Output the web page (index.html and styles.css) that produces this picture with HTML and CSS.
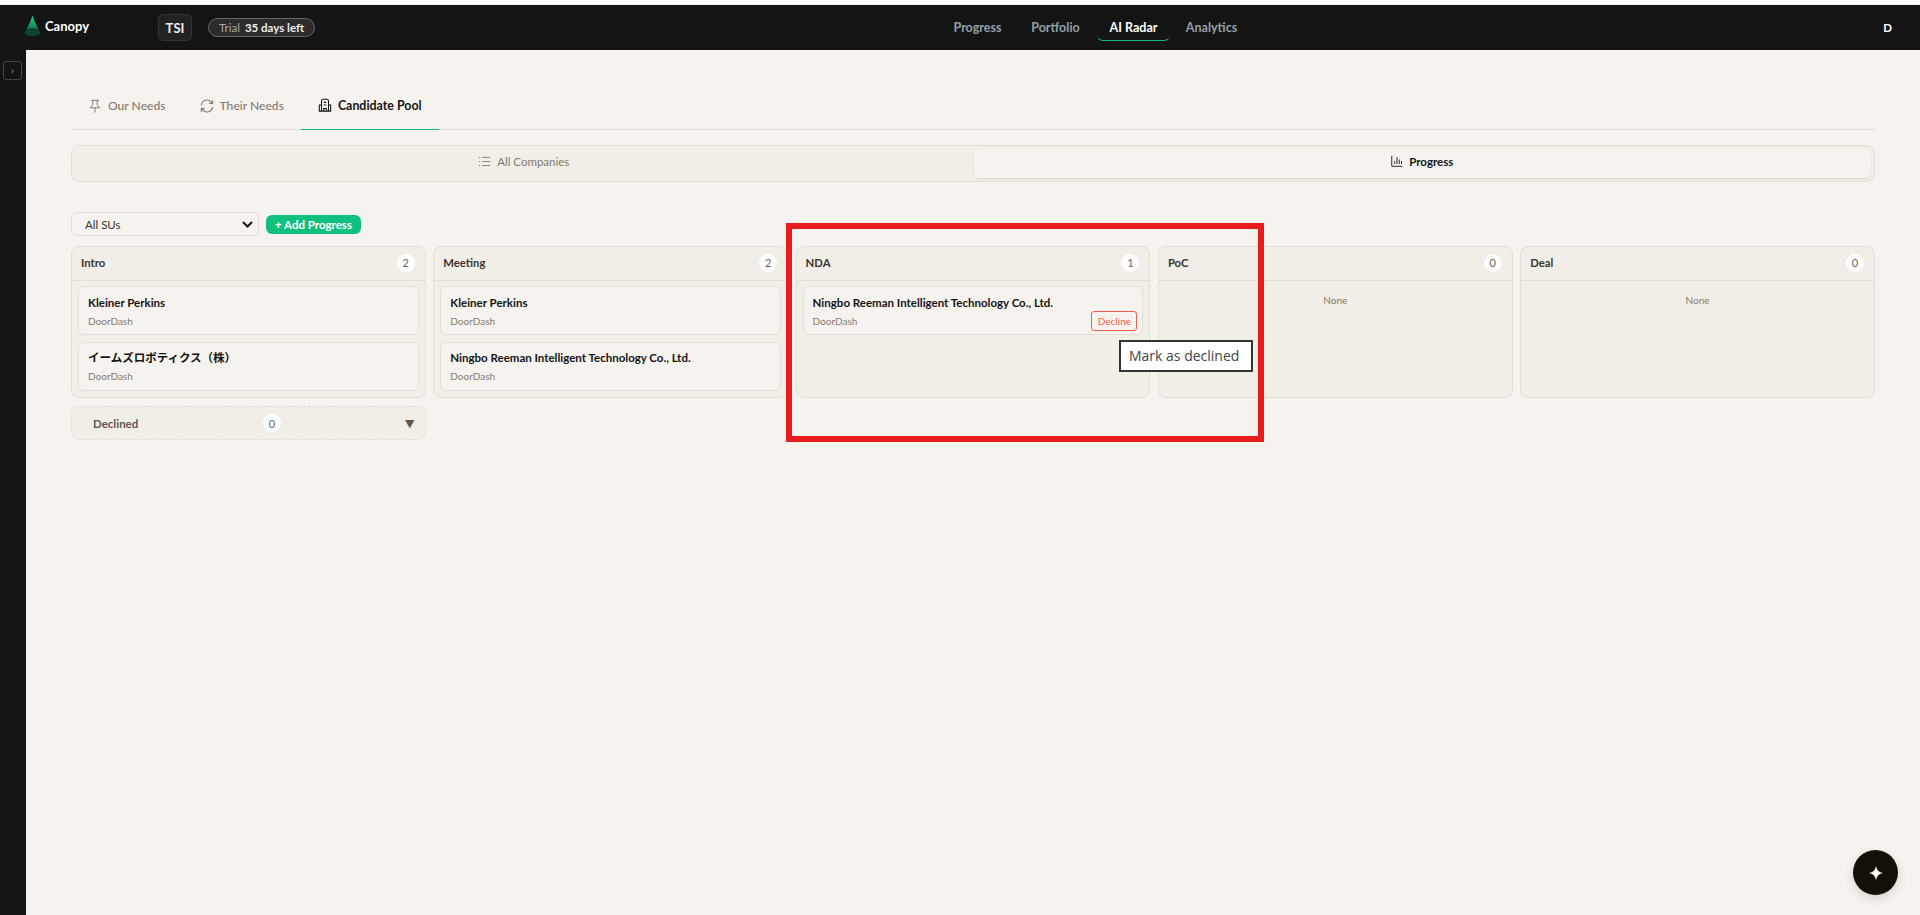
FILE: index.html
```html
<!DOCTYPE html>
<html lang="en">
<head>
<meta charset="utf-8">
<title>Canopy</title>
<link rel="stylesheet" href="styles.css">
</head>
<body>
<div class="topstrip"></div>
<header class="topbar">
  <div class="left">
    <div class="brand">
      <svg class="logo" width="17" height="22" viewBox="0 0 17 22"><defs><linearGradient id="lg" x1="0" y1="0" x2="0" y2="1"><stop offset="0" stop-color="#2ad48a"/><stop offset="0.7" stop-color="#0f9a62"/><stop offset="1" stop-color="#0d6e48"/></linearGradient></defs><path d="M8.500 0.500 L10.500 6 L14.500 14.500 Q8.500 12.500 2.500 14.500 L6.500 6 Z" fill="url(#lg)"/><path d="M2.300 15 Q8.500 13 14.700 15 L16.500 19 Q8.500 23.500 0.500 19 Z" fill="#0b4431"/></svg>
      <span class="brandname">Canopy</span>
    </div>
    <div class="org">TSI</div>
    <div class="trial"><span class="trial-l">Trial</span><b>35 days left</b></div>
  </div>
  <nav class="mainnav">
    <a class="navitem">Progress</a>
    <a class="navitem">Portfolio</a>
    <a class="navitem active">AI Radar</a>
    <a class="navitem">Analytics</a>
  </nav>
  <div class="user">D</div>
</header>
<div class="shell">
  <aside class="side"><button class="sidebtn">›</button></aside>
  <main class="main">
    <div class="tabs">
      <a class="tab"><svg width="14" height="14" viewBox="0 0 16 16" fill="none" stroke="currentColor" stroke-width="1.1"><path d="M3.500 1.500h9M5.500 1.500v5L2.500 10h11L10.500 6.500v-5M8 10v5.500"/></svg>Our Needs</a>
      <a class="tab"><svg width="14" height="14" viewBox="0 0 16 16" fill="none" stroke="currentColor" stroke-width="1.2"><path d="M1.500 7a6.500 6.500 0 0 1 11.500-3.500L14.500 5M14.500 1v4H10.500M14.500 9a6.500 6.500 0 0 1-11.500 3.500L1.500 11M1.500 15v-4h4"/></svg>Their Needs</a>
      <a class="tab on"><svg width="14" height="14" viewBox="0 0 16 16" fill="none" stroke="currentColor" stroke-width="1.2"><path d="M4 15V3.500Q4 1.500 6 1.500h4q2 0 2 2V15M1.500 15V8H4M14.500 15V8H12M1 15h14M6.500 15v-3h3v3M6.500 5h3M6.500 8h3"/></svg>Candidate Pool</a>
    </div>
    <div class="seg">
      <div class="segitem"><svg width="13" height="13" viewBox="0 0 16 16" fill="none" stroke="currentColor" stroke-width="1.1"><path d="M5 3h10M5 8h10M5 13h10M1 3h1.500M1 8h1.500M1 13h1.500"/></svg>All Companies</div>
      <div class="segitem sel"><svg width="12" height="12" viewBox="0 0 16 16" fill="none" stroke="currentColor" stroke-width="1.200"><path d="M1 1v14h14M5 12V8M8 12V3M11 12V6M14 12V8"/></svg>Progress</div>
    </div>
    <div class="toolbar">
      <div class="select"><span>All SUs</span><svg width="11" height="7" viewBox="0 0 11 7" fill="none" stroke="#141414" stroke-width="2"><path d="M1 1l4.500 4.500L10 1"/></svg></div>
      <button class="addbtn">+ Add Progress</button>
    </div>
    <div class="board">
      <section class="col">
        <div class="colhead"><span>Intro</span><i class="count">2</i></div>
        <div class="colbody">
          <div class="card"><div class="cname">Kleiner Perkins</div><div class="csub">DoorDash</div></div>
          <div class="card"><div class="cname">イームズロボティクス（株）</div><div class="csub">DoorDash</div></div>
        </div>
      </section>
      <section class="col">
        <div class="colhead"><span>Meeting</span><i class="count">2</i></div>
        <div class="colbody">
          <div class="card"><div class="cname">Kleiner Perkins</div><div class="csub">DoorDash</div></div>
          <div class="card"><div class="cname">Ningbo Reeman Intelligent Technology Co., Ltd.</div><div class="csub">DoorDash</div></div>
        </div>
      </section>
      <section class="col">
        <div class="colhead"><span>NDA</span><i class="count">1</i></div>
        <div class="colbody">
          <div class="card"><div class="cname">Ningbo Reeman Intelligent Technology Co., Ltd.</div><div class="cfoot"><div class="csub">DoorDash</div><button class="decline">Decline</button></div></div>
        </div>
      </section>
      <section class="col">
        <div class="colhead"><span>PoC</span><i class="count">0</i></div>
        <div class="colbody"><div class="none">None</div></div>
      </section>
      <section class="col">
        <div class="colhead"><span>Deal</span><i class="count">0</i></div>
        <div class="colbody"><div class="none">None</div></div>
      </section>
    </div>
    <div class="declrow">
      <div class="declined"><span class="dname">Declined</span><i class="count">0</i><span class="caret">▼</span></div>
    </div>
  </main>
</div>
<div class="annot"></div>
<div class="tooltip">Mark as declined</div>
<button class="fab"><svg width="14" height="14" viewBox="0 0 14 14"><path d="M7 0 Q8 6 14 7 Q8 8 7 14 Q6 8 0 7 Q6 6 7 0Z" fill="#fff"/></svg></button>
</body>
</html>
```
FILE: styles.css
```css
* { box-sizing: border-box; }
html, body { margin: 0; height: 100%; overflow: hidden; }
body { background: #141414; font-family: "Lato", "Noto Sans CJK JP", sans-serif; color: #141414; display: flex; flex-direction: column; height: 915px; position: relative; }
.topstrip { height: 5px; background: #fff; border-bottom: 1px solid #fdeee6; flex: none; }
.topbar { height: 45px; flex: none; background: #141414; display: flex; align-items: center; padding: 0 24px; }
.left { display: flex; align-items: center; width: 917px; flex: none; }
.brand { display: flex; align-items: center; gap: 4px; width: 134px; margin-top: -3px; }
.brandname { color: #fff; font-weight: 700; font-size: 13px; }
.org { width: 34px; height: 27px; border: 1px solid #333; border-radius: 5px; background: #222; color: #eee; font-weight: 700; font-size: 13px; display: flex; align-items: center; justify-content: center; margin-right: 16px; }
.trial { height: 19px; border: 1px solid #666; border-radius: 10px; background: #2c2c2c; padding: 0 10px; display: flex; align-items: center; gap: 5px; font-size: 11.500px; color: #aaa; white-space: nowrap; }
.trial b { color: #eee; font-weight: 700; }
.mainnav { display: flex; gap: 5px; flex: 1; }
.navitem { position: relative; height: 27px; display: flex; align-items: center; color: #94a0a8; font-weight: 700; font-size: 12.500px; width: 73px; justify-content: center; }
.navitem.active { color: #fff; }
.navitem.active::after { content: ""; position: absolute; left: 0; right: 0; bottom: 0; height: 6px; border-bottom: 1.500px solid #10b981; border-radius: 0 0 6px 6px; }
.user { color: #fff; font-weight: 700; font-size: 11.500px; padding-right: 4px; }
.shell { flex: 1; display: flex; min-height: 0; }
.side { width: 26px; flex: none; background: #141414; padding: 11px 3px; }
.sidebtn { width: 19px; height: 19px; padding: 0; background: transparent; border: 1px solid #444; border-radius: 3px; color: #bbb; font-size: 9px; display: block; font-family: inherit; }
.main { flex: 1; background: #f6f3ee; padding: 33px 45px 0; }
.tabs { display: flex; height: 47px; border-bottom: 1px solid #e2ddd5; margin-bottom: 15px; }
.tab { height: 47px; display: flex; align-items: center; gap: 6px; padding: 0 17px 2px; font-size: 12.100px; font-weight: 500; color: #857a6e; white-space: nowrap; }
.tab.on { color: #141414; font-weight: 700; font-size: 12.400px; border-bottom: 1.500px solid #10b981; }
.seg { height: 37px; background: #f1eee8; border: 1px solid #e2ddd5; border-radius: 8px; display: grid; grid-template-columns: 1fr 1fr; padding: 3px; gap: 1px; }
.segitem { display: flex; align-items: center; justify-content: center; gap: 6px; padding-bottom: 5px; font-size: 11.500px; color: #857a6e; border-radius: 6px; }
.segitem.sel { background: #f6f3ee; color: #141414; font-weight: 700; box-shadow: 0 1px 2px rgba(0,0,0,.1); }
.toolbar { display: flex; align-items: center; gap: 7px; margin-top: 30px; margin-bottom: 10px; }
.select { width: 188px; height: 24px; border: 1px solid #e2ddd5; border-radius: 5px; display: flex; align-items: center; justify-content: space-between; padding: 0 5px 0 13px; font-size: 11.500px; color: #3a352f; }
.addbtn { height: 19px; width: 95px; padding: 0; background: #10c07f; color: #fff; border: 0; border-radius: 6px; font-family: inherit; font-weight: 700; font-size: 11.500px; }
.board { display: grid; grid-template-columns: repeat(5, 1fr); gap: 7.500px; height: 152px; }
.col { background: #f1eee8; border: 1px solid #e2ddd5; border-radius: 8px; display: flex; flex-direction: column; }
.colhead { height: 34px; flex: none; border-bottom: 1px solid #e2ddd5; padding: 0 10px 2px 9px; display: flex; align-items: center; justify-content: space-between; font-size: 11.300px; font-weight: 700; color: #3a352f; }
.count { min-width: 18px; height: 18px; border-radius: 9px; background: #fff; font-style: normal; font-weight: 400; font-size: 11px; color: #6b6358; display: flex; align-items: center; justify-content: center; }
.colbody { padding: 5px 6px 6px; display: flex; flex-direction: column; gap: 7px; flex: 1; }
.card { height: 49px; background: #f6f3ee; border: 1px solid #e2ddd5; border-radius: 6px; padding: 8px 9px 0; }
.card + .card { padding-top: 7px; }
.cname { font-size: 11.500px; font-weight: 700; color: #141414; line-height: 15px; white-space: nowrap; }
.csub { font-size: 10px; color: #857a6e; line-height: 13px; margin-top: 5px; }
.cfoot { display: flex; justify-content: space-between; align-items: flex-start; }
.decline { width: 46px; height: 20px; margin: 1px -4px 0 0; padding: 0; background: transparent; border: 1px solid #f0604a; border-radius: 3px; color: #f0604a; font-family: inherit; font-size: 10px; }
.none { text-align: center; font-size: 10px; color: #857a6e; margin-top: 8px; }
.declrow { display: grid; grid-template-columns: repeat(5, 1fr); gap: 7.500px; margin-top: 8px; }
.declined { height: 34px; background: #f1eee8; border: 1px dashed #e2ddd5; border-radius: 8px; position: relative; display: flex; align-items: center; padding-left: 21px; font-size: 11.500px; font-weight: 700; color: #5f574d; }
.dname { width: 170px; }
.caret { position: absolute; right: 10px; top: 9px; font-size: 10px; color: #5f574d; }
.annot { position: absolute; left: 786px; top: 223px; width: 478px; height: 219px; border: 6px solid #e81c1c; pointer-events: none; }
.tooltip { position: absolute; left: 1119px; top: 340px; width: 134px; height: 32px; background: #fff; border: 1px solid #333; outline: 1px solid #333; outline-offset: -2px; font-family: "Open Sans", sans-serif; font-size: 14px; color: #444; display: flex; align-items: center; padding: 0 0 2px 9px; }
.fab { position: absolute; left: 1853px; top: 850px; width: 45px; height: 45px; border-radius: 50%; border: 0; background: #141008; box-shadow: 0 4px 12px rgba(0,0,0,.12); display: flex; align-items: center; justify-content: center; padding: 0; }
```
